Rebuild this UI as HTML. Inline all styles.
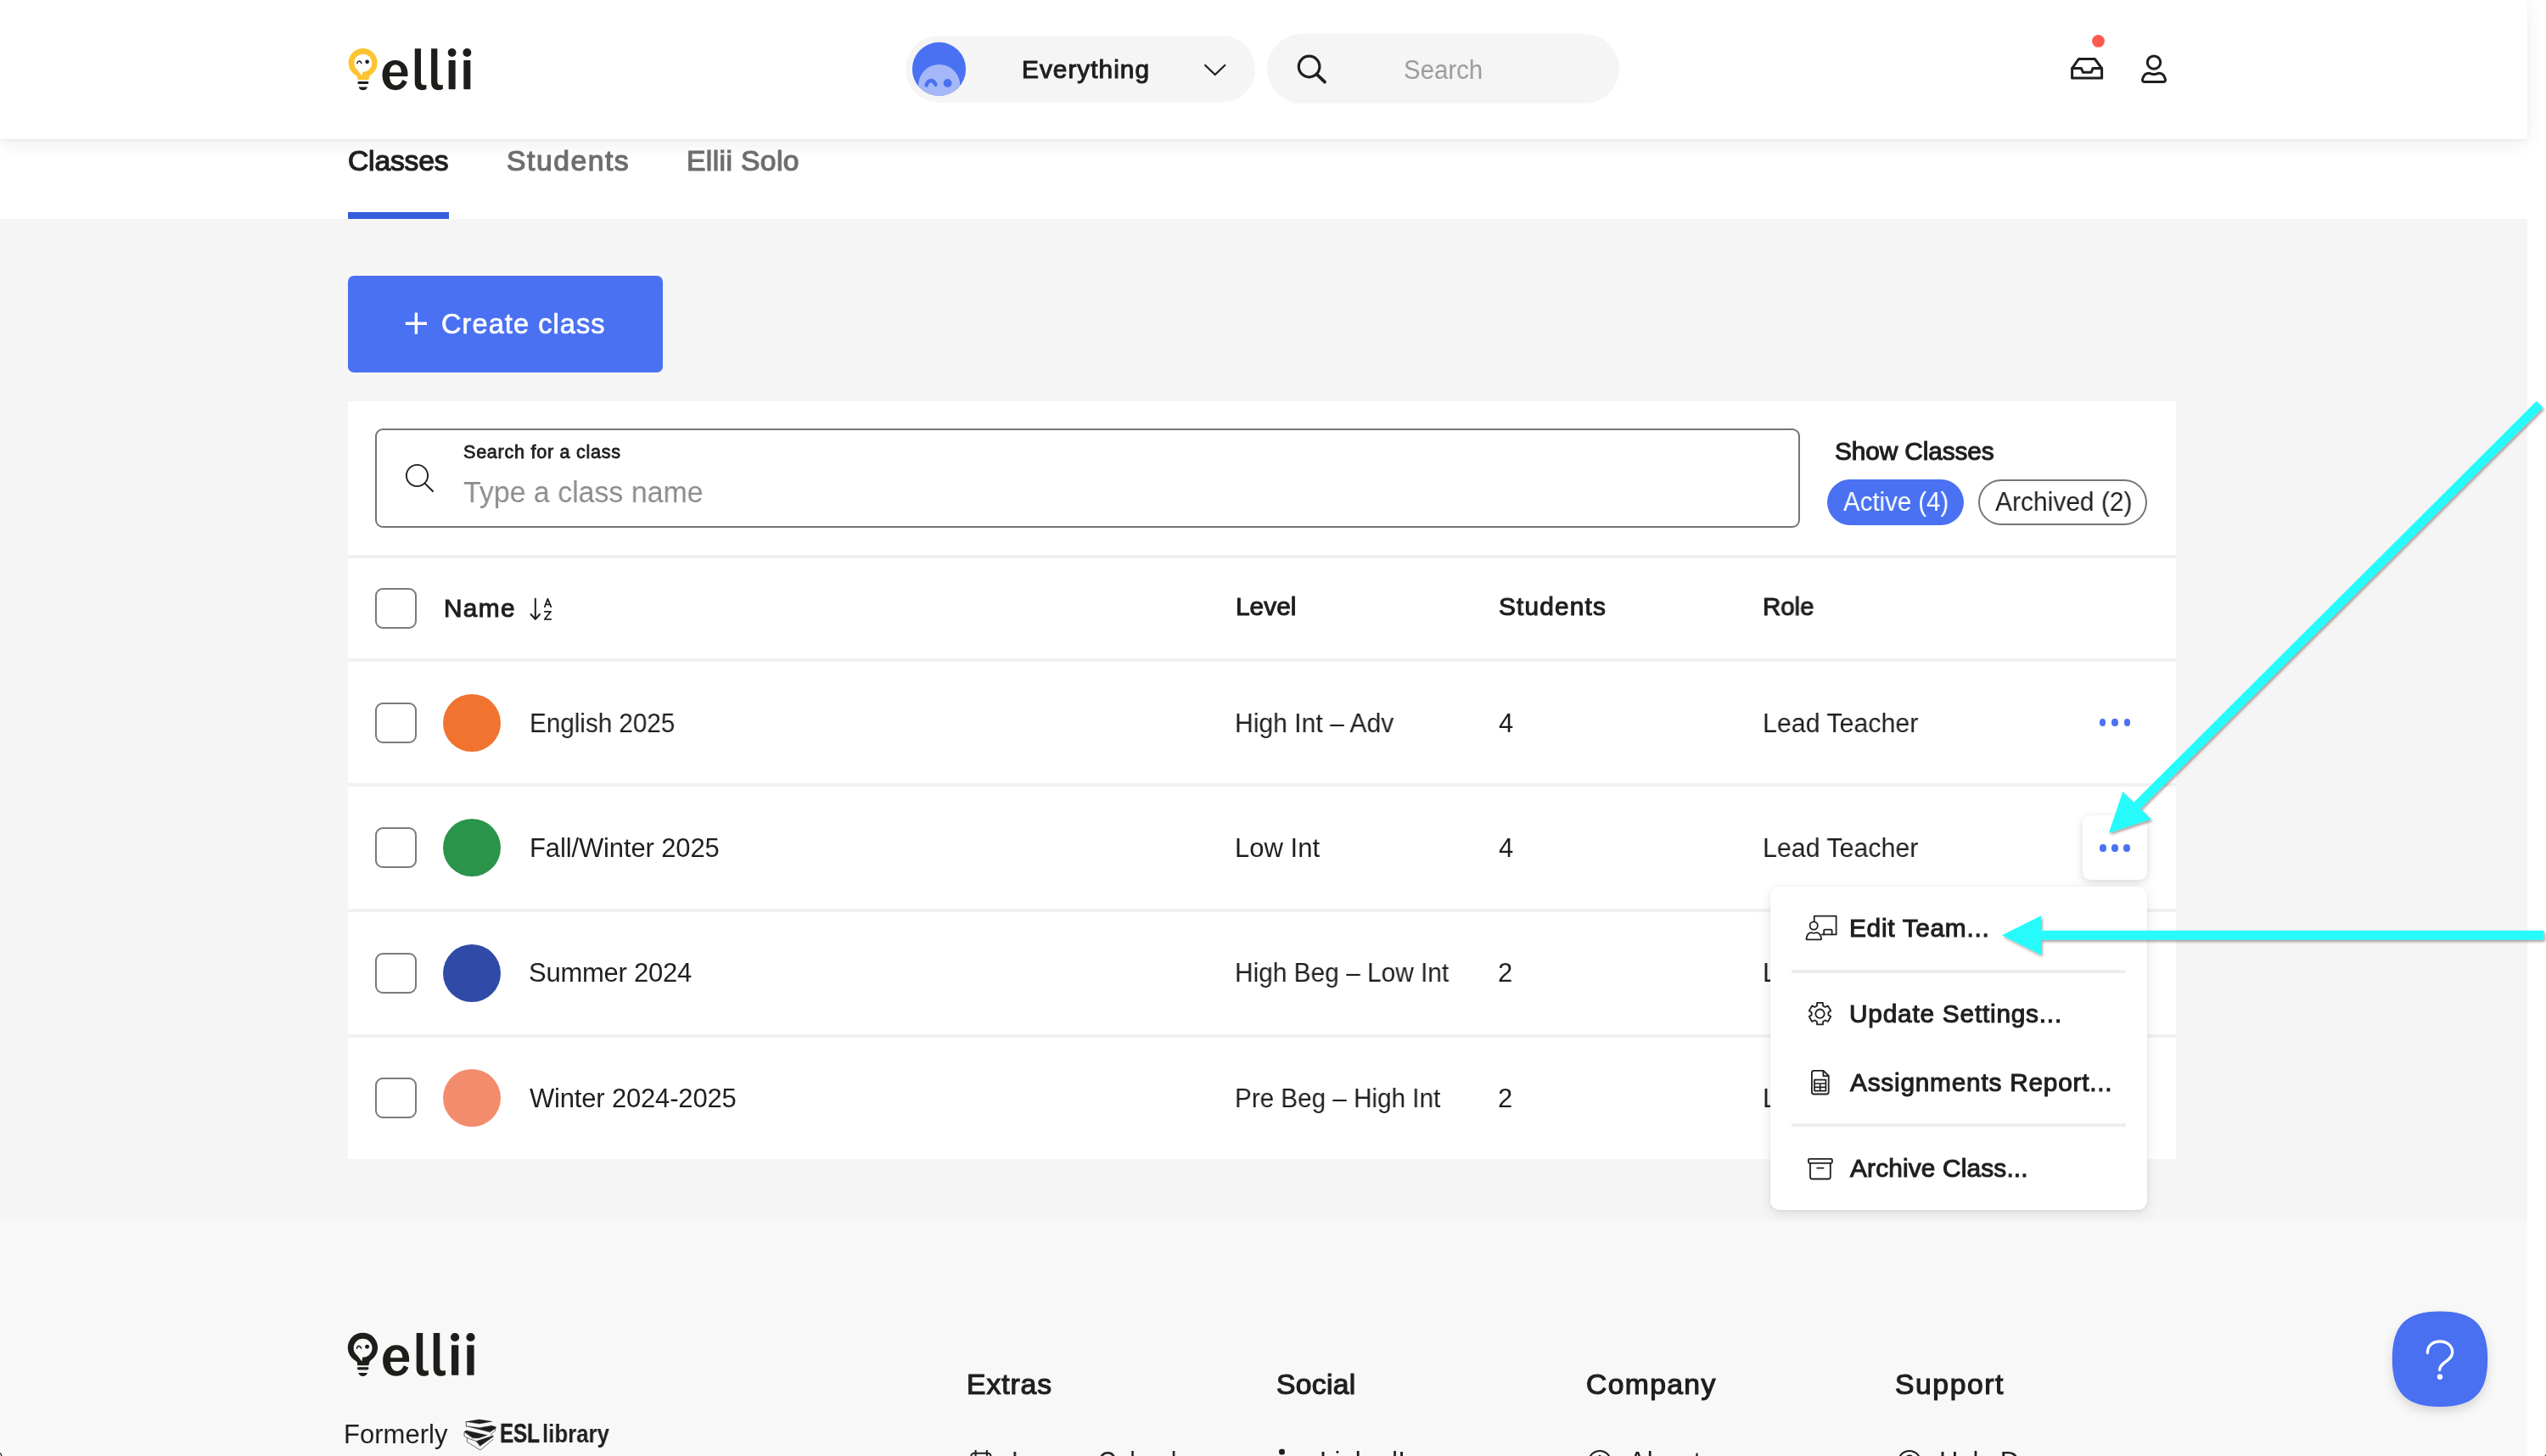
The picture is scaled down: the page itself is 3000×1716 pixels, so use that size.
<!DOCTYPE html>
<html lang="en">
<head>
<meta charset="utf-8">
<title>Classes – Ellii</title>
<style>
*{box-sizing:border-box;margin:0;padding:0}
html,body{width:3000px;height:1716px;overflow:hidden;background:#fff}
body{font-family:"Liberation Sans",sans-serif;color:#1f1f1f;position:relative}
.abs{position:absolute}
.t{position:absolute;z-index:5;will-change:transform;white-space:nowrap;line-height:1;font-family:"Liberation Sans",sans-serif}
#page{position:absolute;left:0;top:0;width:2978px;height:1716px;background:#f5f5f5}
#header{position:absolute;left:0;top:0;width:2978px;height:164px;background:#fff;box-shadow:0 1px 3px rgba(0,0,0,.06),0 6px 22px rgba(0,0,0,.07);z-index:3}
#tabs{position:absolute;left:0;top:164px;width:2978px;height:94px;background:#fff;z-index:1}
#footer{position:absolute;left:0;top:1437px;width:2978px;height:279px;background:#f8f8f8}
.pill{position:absolute;background:#f5f5f5}
#card{position:absolute;left:410px;top:473px;width:2154px;height:893px;background:#fff}
.div{position:absolute;left:410px;width:2154px;height:4px;background:#f1f1f1}
.cb{position:absolute;left:442.4px;width:48.4px;height:48.4px;border:2px solid #7a7a7a;border-radius:9px;background:#fff}
.dot{position:absolute;left:522px;width:68px;height:68px;border-radius:50%}
.more{position:absolute;width:7.4px;height:8.6px;border-radius:50%;background:#4a72f2}
#menu{position:absolute;left:2086px;top:1044.7px;width:444px;height:381.3px;background:#fff;border-radius:11px;box-shadow:0 1px 4px rgba(0,0,0,.07),0 4px 16px rgba(0,0,0,.10)}
#morebtn{position:absolute;left:2453.7px;top:960.5px;width:76.3px;height:76.3px;background:#fff;border-radius:9px;box-shadow:0 2px 8px rgba(0,0,0,.10),0 4px 16px rgba(0,0,0,.08)}
.mdiv{position:absolute;left:2111px;width:393.7px;height:4px;background:#eeeeee}
svg{position:absolute;left:0;top:0;overflow:visible}
</style>
</head>
<body>
<div id="page">
  <div id="tabs"></div>
  <div class="abs" style="left:410px;top:250px;width:119px;height:8px;background:#365ddb;z-index:2"></div>
  <div id="header"></div>
  <div id="footer"></div>

  <!-- header pills -->
  <div class="pill" style="left:1067px;top:42px;width:412px;height:79px;border-radius:40px;z-index:4"></div>
  <div class="pill" style="left:1493px;top:40px;width:415px;height:81.5px;border-radius:41px;z-index:4"></div>

  <!-- create class -->
  <div class="abs" style="left:410px;top:325px;width:371px;height:114px;border-radius:7px;background:#4971f2"></div>

  <!-- card -->
  <div id="card"></div>
  <div class="abs" style="left:442.4px;top:505.3px;width:1678.6px;height:116.3px;border:2px solid #767676;border-radius:9px;background:#fff"></div>
  <div class="abs" style="left:2153px;top:565px;width:161px;height:54px;border-radius:27px;background:#4971f2"></div>
  <div class="abs" style="left:2331px;top:565px;width:199px;height:54px;border-radius:27px;border:2px solid #767676;background:#fff"></div>
  <div class="div" style="top:654px"></div>
  <div class="div" style="top:776.3px"></div>
  <div class="div" style="top:923.3px"></div>
  <div class="div" style="top:1070.7px"></div>
  <div class="div" style="top:1218.5px"></div>

  <div class="cb" style="top:692.6px"></div>
  <div class="cb" style="top:827.8px"></div>
  <div class="cb" style="top:975.1px"></div>
  <div class="cb" style="top:1122.5px"></div>
  <div class="cb" style="top:1269.8px"></div>

  <div class="dot" style="top:818px;background:#f07430"></div>
  <div class="dot" style="top:965.3px;background:#2a944a"></div>
  <div class="dot" style="top:1112.7px;background:#304aa8"></div>
  <div class="dot" style="top:1260px;background:#f38c6d"></div>

  <div class="more" style="left:2474px;top:847.4px"></div>
  <div class="more" style="left:2488.3px;top:847.4px"></div>
  <div class="more" style="left:2502.6px;top:847.4px"></div>

<span class="t" style="left:1204.04px;top:67.26px;font-size:29.82px;font-weight:400;color:#1f1f1f;letter-spacing:1.018px;-webkit-text-stroke:1.07px #1f1f1f;">Everything</span>
<span class="t" style="left:1654.05px;top:66.76px;font-size:31px;font-weight:400;color:#9b9b9b;letter-spacing:0.000px;transform:scaleX(0.9481);transform-origin:0 50%;">Search</span>
<span class="t" style="left:409.61px;top:172.60px;font-size:33.67px;font-weight:400;color:#1f1f1f;letter-spacing:-0.181px;-webkit-text-stroke:1.21px #1f1f1f;">Classes</span>
<span class="t" style="left:596.61px;top:172.60px;font-size:33.67px;font-weight:400;color:#6e6e6e;letter-spacing:1.538px;-webkit-text-stroke:1.21px #6e6e6e;">Students</span>
<span class="t" style="left:808.61px;top:172.60px;font-size:33.67px;font-weight:400;color:#6e6e6e;letter-spacing:0.382px;-webkit-text-stroke:1.21px #6e6e6e;">Ellii Solo</span>
<span class="t" style="left:520.33px;top:365.97px;font-size:32.52px;font-weight:400;color:#ffffff;letter-spacing:1.082px;-webkit-text-stroke:0.65px #ffffff;">Create class</span>
<span class="t" style="left:546.09px;top:521.88px;font-size:21.64px;font-weight:400;color:#1f1f1f;letter-spacing:0.709px;-webkit-text-stroke:0.78px #1f1f1f;">Search for a class</span>
<span class="t" style="left:545.70px;top:562.95px;font-size:35.5px;font-weight:400;color:#8c8c8c;letter-spacing:0.000px;transform:scaleX(0.9545);transform-origin:0 50%;">Type a class name</span>
<span class="t" style="left:2162.13px;top:517.26px;font-size:29.82px;font-weight:400;color:#1f1f1f;letter-spacing:-0.105px;-webkit-text-stroke:1.07px #1f1f1f;">Show Classes</span>
<span class="t" style="left:2172.00px;top:576.36px;font-size:31px;font-weight:400;color:#ffffff;letter-spacing:0.000px;transform:scaleX(0.9491);transform-origin:0 50%;">Active (4)</span>
<span class="t" style="left:2350.50px;top:576.36px;font-size:31px;font-weight:400;color:#1f1f1f;letter-spacing:0.000px;transform:scaleX(0.9663);transform-origin:0 50%;">Archived (2)</span>
<span class="t" style="left:523.33px;top:701.96px;font-size:29.82px;font-weight:400;color:#1f1f1f;letter-spacing:1.329px;-webkit-text-stroke:1.07px #1f1f1f;">Name</span>
<span class="t" style="left:1455.74px;top:700.06px;font-size:29.82px;font-weight:400;color:#1f1f1f;letter-spacing:0.021px;-webkit-text-stroke:1.07px #1f1f1f;">Level</span>
<span class="t" style="left:1765.54px;top:700.06px;font-size:29.82px;font-weight:400;color:#1f1f1f;letter-spacing:1.180px;-webkit-text-stroke:1.07px #1f1f1f;">Students</span>
<span class="t" style="left:2077.15px;top:700.06px;font-size:29.82px;font-weight:400;color:#1f1f1f;letter-spacing:0.000px;transform:scaleX(0.9866);transform-origin:0 50%;-webkit-text-stroke:1.07px #1f1f1f;">Role</span>
<span class="t" style="left:623.89px;top:836.76px;font-size:31px;font-weight:400;color:#1f1f1f;letter-spacing:0.000px;transform:scaleX(0.9556);transform-origin:0 50%;">English 2025</span>
<span class="t" style="left:1454.96px;top:836.76px;font-size:31px;font-weight:400;color:#1f1f1f;letter-spacing:0.000px;transform:scaleX(0.9704);transform-origin:0 50%;">High Int – Adv</span>
<span class="t" style="left:1765.50px;top:836.76px;font-size:31px;font-weight:400;color:#1f1f1f;letter-spacing:0.000px;">4</span>
<span class="t" style="left:2076.64px;top:836.76px;font-size:31px;font-weight:400;color:#1f1f1f;letter-spacing:0.000px;transform:scaleX(0.9788);transform-origin:0 50%;">Lead Teacher</span>
<span class="t" style="left:623.80px;top:984.09px;font-size:31px;font-weight:400;color:#1f1f1f;letter-spacing:-0.124px;">Fall/Winter 2025</span>
<span class="t" style="left:1454.90px;top:984.09px;font-size:31px;font-weight:400;color:#1f1f1f;letter-spacing:0.028px;">Low Int</span>
<span class="t" style="left:1765.50px;top:984.09px;font-size:31px;font-weight:400;color:#1f1f1f;letter-spacing:0.000px;">4</span>
<span class="t" style="left:2076.64px;top:984.09px;font-size:31px;font-weight:400;color:#1f1f1f;letter-spacing:0.000px;transform:scaleX(0.9788);transform-origin:0 50%;">Lead Teacher</span>
<span class="t" style="left:622.60px;top:1131.42px;font-size:31px;font-weight:400;color:#1f1f1f;letter-spacing:-0.246px;">Summer 2024</span>
<span class="t" style="left:1454.97px;top:1131.42px;font-size:31px;font-weight:400;color:#1f1f1f;letter-spacing:0.000px;transform:scaleX(0.9630);transform-origin:0 50%;">High Beg – Low Int</span>
<span class="t" style="left:1764.50px;top:1131.42px;font-size:31px;font-weight:400;color:#1f1f1f;letter-spacing:0.000px;">2</span>
<span class="t" style="left:2076.64px;top:1131.42px;font-size:31px;font-weight:400;color:#1f1f1f;letter-spacing:0.000px;transform:scaleX(0.9788);transform-origin:0 50%;">Lead Teacher</span>
<span class="t" style="left:623.50px;top:1278.75px;font-size:31px;font-weight:400;color:#1f1f1f;letter-spacing:-0.179px;">Winter 2024-2025</span>
<span class="t" style="left:1454.99px;top:1278.75px;font-size:31px;font-weight:400;color:#1f1f1f;letter-spacing:0.000px;transform:scaleX(0.9563);transform-origin:0 50%;">Pre Beg – High Int</span>
<span class="t" style="left:1764.50px;top:1278.75px;font-size:31px;font-weight:400;color:#1f1f1f;letter-spacing:0.000px;">2</span>
<span class="t" style="left:2076.64px;top:1278.75px;font-size:31px;font-weight:400;color:#1f1f1f;letter-spacing:0.000px;transform:scaleX(0.9788);transform-origin:0 50%;">Lead Teacher</span>
<span class="t" style="left:405.30px;top:1675.36px;font-size:31px;font-weight:400;color:#1f1f1f;letter-spacing:0.018px;">Formerly</span>
<span class="t" style="left:1139.11px;top:1615.00px;font-size:33.67px;font-weight:400;color:#1f1f1f;letter-spacing:0.947px;-webkit-text-stroke:1.21px #1f1f1f;">Extras</span>
<span class="t" style="left:1504.31px;top:1615.00px;font-size:33.67px;font-weight:400;color:#1f1f1f;letter-spacing:0.300px;-webkit-text-stroke:1.21px #1f1f1f;">Social</span>
<span class="t" style="left:1868.61px;top:1615.00px;font-size:33.67px;font-weight:400;color:#1f1f1f;letter-spacing:1.363px;-webkit-text-stroke:1.21px #1f1f1f;">Company</span>
<span class="t" style="left:2233.30px;top:1615.00px;font-size:33.67px;font-weight:400;color:#1f1f1f;letter-spacing:1.594px;-webkit-text-stroke:1.21px #1f1f1f;">Support</span>
<span class="t" style="left:1192.12px;top:1707.46px;font-size:31px;font-weight:400;color:#1f1f1f;letter-spacing:0.000px;transform:scaleX(0.9394);transform-origin:0 50%;">Lesson Calendar</span>
<span class="t" style="left:1555.00px;top:1707.46px;font-size:31px;font-weight:400;color:#1f1f1f;letter-spacing:0.148px;">LinkedIn</span>
<span class="t" style="left:1918.50px;top:1707.46px;font-size:31px;font-weight:400;color:#1f1f1f;letter-spacing:1.025px;">About</span>
<span class="t" style="left:2284.50px;top:1707.46px;font-size:31px;font-weight:400;color:#1f1f1f;letter-spacing:-0.125px;">Help Docs</span>
<span class="t" style="left:589.42px;top:1673.98px;font-size:30.5px;font-weight:700;color:#1f1f1f;letter-spacing:0.000px;transform:scaleX(0.7903);transform-origin:0 50%;-webkit-text-stroke:0.5px #1f1f1f;">ESL</span>
<span class="t" style="left:639.28px;top:1674.61px;font-size:30px;font-weight:700;color:#1f1f1f;letter-spacing:0.000px;transform:scaleX(0.8608);transform-origin:0 50%;">library</span>

  <!-- ICONS layer 1 -->
  <svg width="2978" height="1716" viewBox="0 0 2978 1716" style="z-index:5">
    <defs><filter id="hshadow" x="-30%" y="-30%" width="160%" height="170%"><feDropShadow dx="0" dy="6" stdDeviation="6" flood-color="#000" flood-opacity="0.13"/></filter></defs><g transform="translate(401.13 41.73) scale(.966)">
  <circle cx="27.42" cy="33.3" r="17.6" fill="#fdc42f"/>
  <path d="M11.8 40.8 L44 39.3 L35.7 49.5 L34.3 54.2 H21.2 L20.8 50.5 Z" fill="#fdc42f"/>
  <circle cx="27.6" cy="33.7" r="10.9" fill="#ffffff"/>
  <path d="M17.2 37.2 L26.3 49.4 L27.3 44.4 L28 39 Z" fill="#ffffff"/>
  <path d="M20.4 33.9 Q21.6 30.9 23.4 31.4 Q24.6 31.8 25.6 33.9" fill="none" stroke="#1f1d1a" stroke-width="1.6" stroke-linecap="round"/>
  <circle cx="32.6" cy="32.2" r="2.45" fill="#1f1d1a"/>
  <rect x="21" y="56.2" width="13.4" height="3.2" rx="1.4" fill="#1f1d1a"/>
  <path d="M22.2 62.9 H33 Q31.5 66.9 27.6 66.9 Q23.7 66.9 22.2 62.9 Z" fill="#1f1d1a"/>
  <g fill="#1f1d1a">
    <path fill-rule="evenodd" d="M82.1 49.9 L59.9 49.9 C60.3 56.5 63 60.9 68 60.9 C71.5 60.9 74 58.5 75.8 54.2 L81.3 56.8 C78.8 63 74 66.8 67 66.8 C57.5 66.8 51.1 59.5 51.1 48.5 C51.1 37.5 57.5 30.2 67 30.2 C76.5 30.2 82.1 37.5 82.1 46 Z M59.9 45.2 L74.3 45.2 C74.3 39.5 71.5 35.7 67.2 35.7 C62.8 35.7 60.2 39.8 59.9 45.2 Z"/>
    <path d="M90.7 16.1 H98.2 V56 C98.2 59.5 99.5 60.6 102.5 60.5 L104.9 60.3 L104.9 65.6 C103 66.5 101.5 66.8 99.8 66.8 C94 66.8 90.7 63.5 90.7 57 Z"/>
    <path d="M90.7 16.1 H98.2 V56 C98.2 59.5 99.5 60.6 102.5 60.5 L104.9 60.3 L104.9 65.6 C103 66.5 101.5 66.8 99.8 66.8 C94 66.8 90.7 63.5 90.7 57 Z" transform="translate(20.03 0)"/>
    <rect x="132" y="30.2" width="8.3" height="35.5" rx="0.8"/>
    <rect x="150.3" y="30.2" width="8.3" height="35.5" rx="0.8"/>
    <circle cx="136.1" cy="21" r="5.1"/>
    <circle cx="154.5" cy="21" r="5.1"/>
  </g>
</g>
<g transform="translate(400 1555)">
  <circle cx="27.42" cy="33.3" r="17.6" fill="#1f1d1a"/>
  <path d="M11.8 40.8 L44 39.3 L35.7 49.5 L34.3 54.2 H21.2 L20.8 50.5 Z" fill="#1f1d1a"/>
  <circle cx="27.6" cy="33.7" r="10.9" fill="#f8f8f8"/>
  <path d="M17.2 37.2 L26.3 49.4 L27.3 44.4 L28 39 Z" fill="#f8f8f8"/>
  <path d="M20.4 33.9 Q21.6 30.9 23.4 31.4 Q24.6 31.8 25.6 33.9" fill="none" stroke="#1f1d1a" stroke-width="1.6" stroke-linecap="round"/>
  <circle cx="32.6" cy="32.2" r="2.45" fill="#1f1d1a"/>
  <rect x="21" y="56.2" width="13.4" height="3.2" rx="1.4" fill="#1f1d1a"/>
  <path d="M22.2 62.9 H33 Q31.5 66.9 27.6 66.9 Q23.7 66.9 22.2 62.9 Z" fill="#1f1d1a"/>
  <g fill="#1f1d1a">
    <path fill-rule="evenodd" d="M82.1 49.9 L59.9 49.9 C60.3 56.5 63 60.9 68 60.9 C71.5 60.9 74 58.5 75.8 54.2 L81.3 56.8 C78.8 63 74 66.8 67 66.8 C57.5 66.8 51.1 59.5 51.1 48.5 C51.1 37.5 57.5 30.2 67 30.2 C76.5 30.2 82.1 37.5 82.1 46 Z M59.9 45.2 L74.3 45.2 C74.3 39.5 71.5 35.7 67.2 35.7 C62.8 35.7 60.2 39.8 59.9 45.2 Z"/>
    <path d="M90.7 16.1 H98.2 V56 C98.2 59.5 99.5 60.6 102.5 60.5 L104.9 60.3 L104.9 65.6 C103 66.5 101.5 66.8 99.8 66.8 C94 66.8 90.7 63.5 90.7 57 Z"/>
    <path d="M90.7 16.1 H98.2 V56 C98.2 59.5 99.5 60.6 102.5 60.5 L104.9 60.3 L104.9 65.6 C103 66.5 101.5 66.8 99.8 66.8 C94 66.8 90.7 63.5 90.7 57 Z" transform="translate(20.03 0)"/>
    <rect x="132" y="30.2" width="8.3" height="35.5" rx="0.8"/>
    <rect x="150.3" y="30.2" width="8.3" height="35.5" rx="0.8"/>
    <circle cx="136.1" cy="21" r="5.1"/>
    <circle cx="154.5" cy="21" r="5.1"/>
  </g>
</g>

    <!-- avatar -->
<defs><clipPath id="avc"><circle cx="1106.5" cy="81.4" r="31.6"/></clipPath></defs>
<circle cx="1106.5" cy="81.4" r="31.6" fill="#4971f2"/>
<g clip-path="url(#avc)">
  <circle cx="1106.7" cy="100.6" r="24.6" fill="#a4b8f8"/>
</g>
<path d="M1091.5 100.5 Q1093.5 94.6 1097.5 95 Q1100.5 95.4 1102.5 99.8" fill="none" stroke="#4971f2" stroke-width="4.3" stroke-linecap="round"/>
<circle cx="1116.6" cy="98" r="4.9" fill="#4971f2"/>
<!-- chevron -->
<path d="M1419.5 76.2 L1431.7 88 L1444 76.2" fill="none" stroke="#1f1f1f" stroke-width="2.2"/>
<!-- header search -->
<circle cx="1542.6" cy="78.5" r="12.3" fill="none" stroke="#1f1f1f" stroke-width="3.2"/>
<path d="M1551.6 87.6 L1561 96.6" stroke="#1f1f1f" stroke-width="3.8" stroke-linecap="round"/>
<!-- inbox -->
<g fill="none" stroke="#1f1f1f" stroke-width="3" stroke-linejoin="round" stroke-linecap="round">
  <path d="M2441.6 80.6 L2449.4 69.5 H2468.4 L2476.6 80.6 V92 H2441.6 Z"/>
  <path d="M2441.6 80.6 H2452.4 L2454.6 85.3 H2464.2 L2466 80.6 H2476.6"/>
</g>
<circle cx="2472.5" cy="48.4" r="7.4" fill="#fb5a4e"/>
<!-- user -->
<circle cx="2538" cy="73.6" r="7.7" fill="none" stroke="#1f1f1f" stroke-width="3"/>
<path d="M2526.8 96.4 C2524.4 96.4 2524.2 94.4 2524.8 92.6 C2526 88.8 2528.6 86.2 2532 86.2 C2534 86.2 2535 87.6 2538 87.6 C2541 87.6 2542 86.2 2544 86.2 C2547.4 86.2 2550 88.8 2551.2 92.6 C2551.8 94.4 2551.6 96.4 2549.2 96.4 Z" fill="none" stroke="#1f1f1f" stroke-width="3" stroke-linejoin="round"/>
<!-- plus -->
<path d="M477.8 381.2 H503 M490.4 368.6 V393.8" stroke="#fff" stroke-width="3.4" fill="none"/>
<!-- class search -->
<circle cx="491.5" cy="560.5" r="12.6" fill="none" stroke="#1f1f1f" stroke-width="1.9"/>
<path d="M500.5 569.6 L510 579" stroke="#1f1f1f" stroke-width="2" stroke-linecap="round"/>
<!-- sort icon -->
<g fill="none" stroke="#1f1f1f" stroke-width="2" stroke-linecap="round" stroke-linejoin="round">
  <path d="M630.8 705.8 V729.6 M625.6 724 L630.8 729.8 L636 724"/>
  <path d="M641.8 715.2 L645.4 705.8 L649.2 715.2 M643 712.4 H648" stroke-width="1.8"/>
  <path d="M641.8 720.8 H649 L641.8 729.8 H649.2" stroke-width="1.8"/>
</g>
<!-- ESL books -->
<g transform="translate(540 1666) scale(0.039277)" fill="#1f1d1b" stroke="#1f1d1b" stroke-linejoin="round" stroke-linecap="round">
  <path d="M230 243 L630 180 L1015 238 L640 305 Z" stroke-width="10"/>
  <path d="M233 245 L240 382" fill="none" stroke-width="18"/>
  <path d="M240 375 L640 425 L1000 360 L1140 408 L1112 448 L950 556 Z" stroke-width="10"/>
  <path d="M1112 445 L1100 520 L1000 600 L985 655" fill="none" stroke-width="16"/>
  <path d="M180 545 L240 508 L870 652 L600 738 L430 735 Z" stroke-width="10"/>
  <path d="M183 550 L177 680 L262 730 L266 850 L640 1085 L700 1068 L1040 775" fill="none" stroke-width="16"/>
  <path d="M262 730 L540 830" fill="none" stroke-width="16"/>
  <path d="M540 828 L1045 662 L1055 690 L655 975 Z" stroke-width="10"/>
</g>
<!-- footer link icons (tops only visible) -->
<g fill="none" stroke="#1f1f1f" stroke-width="2">
  <rect x="1144.3" y="1712.8" width="23.2" height="24" rx="3.5"/>
  <path d="M1149.6 1709 V1716 M1162.9 1709 V1716"/>
  <circle cx="1885" cy="1723" r="13"/>
  <circle cx="2249.9" cy="1723" r="13"/>
</g>
<rect x="1507.1" y="1707.8" width="6.8" height="6.6" rx="2.6" fill="#1f1f1f"/>
<circle cx="1885" cy="1716.4" r="1.6" fill="#1f1f1f"/>
<path d="M2246.6 1718 Q2247 1715.4 2250 1715.4 Q2253 1715.4 2253.2 1718" fill="none" stroke="#1f1f1f" stroke-width="1.8"/>
<!-- help button -->
<g>
  <path d="M2875 1545.6 C2915 1545.6 2931.2 1561.8 2931.2 1601.8 C2931.2 1641.8 2915 1658 2875 1658 C2835 1658 2818.8 1641.8 2818.8 1601.8 C2818.8 1561.8 2835 1545.6 2875 1545.6 Z" fill="#4870f1" filter="url(#hshadow)"/>
  <path d="M2860.4 1594.6 C2860.4 1586 2866.5 1581 2875 1581 C2883.5 1581 2889.7 1586.3 2889.7 1593.8 C2889.7 1604 2875 1605 2874.6 1614.6" fill="none" stroke="#fff" stroke-width="3.3" stroke-linecap="round"/>
  <circle cx="2875" cy="1622.8" r="3.2" fill="#fff"/>
</g>

  </svg>

  <!-- dropdown -->
  <div id="morebtn" style="z-index:6"></div>
  <div class="more" style="left:2474.4px;top:995.1px;z-index:7"></div>
  <div class="more" style="left:2488.4px;top:995.1px;z-index:7"></div>
  <div class="more" style="left:2502.4px;top:995.1px;z-index:7"></div>
  <div id="menu" style="z-index:6"></div>
  <div class="mdiv" style="top:1142.5px;z-index:7"></div>
  <div class="mdiv" style="top:1324.2px;z-index:7"></div>
  <div style="position:absolute;left:0;top:0;z-index:8">
<span class="t" style="left:2178.53px;top:1079.26px;font-size:29.82px;font-weight:400;color:#1f1f1f;letter-spacing:0.710px;-webkit-text-stroke:1.07px #1f1f1f;">Edit Team...</span>
<span class="t" style="left:2178.53px;top:1179.56px;font-size:29.82px;font-weight:400;color:#1f1f1f;letter-spacing:0.778px;-webkit-text-stroke:1.07px #1f1f1f;">Update Settings...</span>
<span class="t" style="left:2179.73px;top:1261.26px;font-size:29.82px;font-weight:400;color:#1f1f1f;letter-spacing:0.767px;-webkit-text-stroke:1.07px #1f1f1f;">Assignments Report...</span>
<span class="t" style="left:2179.73px;top:1362.06px;font-size:29.82px;font-weight:400;color:#1f1f1f;letter-spacing:0.168px;-webkit-text-stroke:1.07px #1f1f1f;">Archive Class...</span>
  </div>
  <svg width="2978" height="1716" viewBox="0 0 2978 1716" style="z-index:8">
    <g fill="none" stroke="#1f1f1f" stroke-width="1.8" stroke-linejoin="round" stroke-linecap="round">
  <!-- chalkboard user -->
  <path d="M2137.7 1085.8 V1079.7 H2163.6 V1101.4 H2146.5"/>
  <path d="M2149.2 1101.4 V1096.6 Q2149.2 1095.6 2150.2 1095.6 H2157.6 Q2158.6 1095.6 2158.6 1096.6 V1101.4"/>
  <circle cx="2137.2" cy="1091" r="4.6"/>
  <path d="M2129.2 1107.4 C2128.6 1107.4 2128.4 1107 2128.5 1106.3 C2129.2 1102 2131.5 1099.2 2134.5 1099.2 C2135.6 1099.2 2136 1099.8 2137.3 1099.8 C2138.6 1099.8 2139 1099.2 2140.1 1099.2 C2143.1 1099.2 2145.4 1102 2146.1 1106.3 C2146.2 1107 2146 1107.4 2145.4 1107.4 Z"/>
  <!-- gear -->
  <g transform="translate(2144.5 1194.7)">
    <circle r="5.2"/>
    <path d="M-3.58 -9.34 L-3.42 -12.75 L3.42 -12.75 L3.58 -9.34 L6.29 -7.77 L9.33 -9.33 L12.75 -3.42 L9.88 -1.56 L9.88 1.56 L12.75 3.42 L9.33 9.33 L6.29 7.77 L3.58 9.34 L3.42 12.75 L-3.42 12.75 L-3.58 9.34 L-6.29 7.77 L-9.33 9.33 L-12.75 3.42 L-9.88 1.56 L-9.88 -1.56 L-12.75 -3.42 L-9.33 -9.33 L-6.29 -7.77 Z" stroke-linejoin="round"/>
  </g>
  <!-- file spreadsheet -->
  <path d="M2137.4 1261.9 H2148.6 L2154.7 1268 V1287 Q2154.7 1289.5 2152.2 1289.5 H2137.4 Q2134.9 1289.5 2134.9 1287 V1264.4 Q2134.9 1261.9 2137.4 1261.9 Z"/>
  <path d="M2148.4 1262.2 V1268.2 H2154.5"/>
  <path d="M2138 1272.7 H2151.4 V1285.7 H2138 Z M2138 1277 H2151.4 M2138 1281.4 H2151.4 M2144.7 1277 V1285.7" stroke-width="1.7"/>
  <!-- archive -->
  <rect x="2130.9" y="1365.8" width="28" height="5" rx="1.2"/>
  <path d="M2133 1370.8 V1387 Q2133 1389.5 2135.5 1389.5 H2154.3 Q2156.8 1389.5 2156.8 1387 V1370.8"/>
  <path d="M2141.2 1376.6 H2148.6"/>
</g>

  </svg>
</div>

<svg width="3000" height="1716" viewBox="0 0 3000 1716" style="z-index:19">
  <path d="M0 1712.6 Q1.5 1713.4 1.9 1716" fill="none" stroke="#222" stroke-width="1.4"/>
  <rect x="2998.6" y="1714.6" width="1.4" height="1.4" fill="#555b63"/>
</svg>
<!-- annotations -->
<svg width="3000" height="1716" viewBox="0 0 3000 1716" style="z-index:20">
  <defs>
  <filter id="ash" x="-5%" y="-5%" width="110%" height="110%">
    <feDropShadow dx="1.6" dy="2.2" stdDeviation="1.5" flood-color="#201010" flood-opacity="0.38"/>
  </filter>
</defs>
<g filter="url(#ash)" fill="#26fafa" stroke="none">
  <path d="M2992.6 476.6 L2518 949.6" stroke="#26fafa" stroke-width="10.8" fill="none"/>
  <path d="M2484.9 981.7 L2534.8 965.6 L2501.3 933 Z"/>
  <path d="M2997.5 1102.3 L2403 1102.3" stroke="#26fafa" stroke-width="11" fill="none"/>
  <path d="M2359 1102.3 L2405 1079.3 L2405 1125.6 Z"/>
</g>

</svg>
</body>
</html>
